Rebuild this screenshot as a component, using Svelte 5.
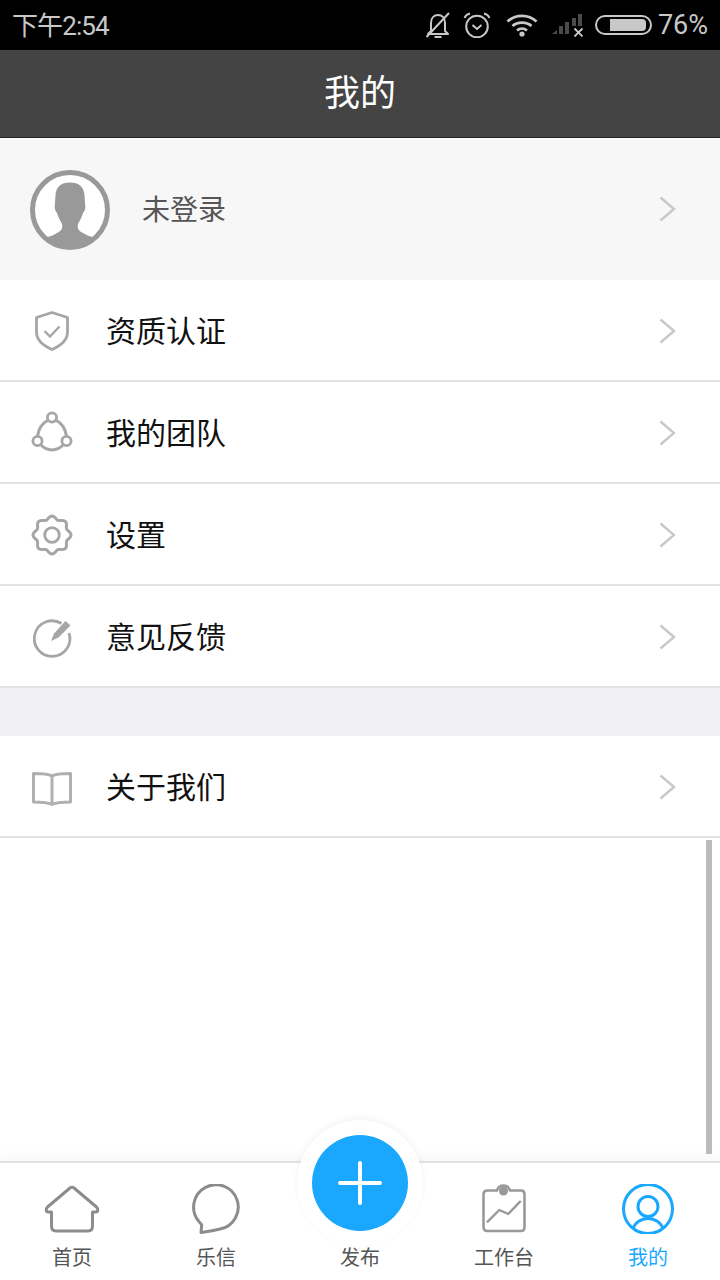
<script>
  const menuTop = [
    { label: '资质认证', icon: 'shield' },
    { label: '我的团队', icon: 'team' },
    { label: '设置', icon: 'gear' },
    { label: '意见反馈', icon: 'edit' }
  ];
  const gearPath = (() => {
    // wavy outline of the settings icon
    let d = '';
    for (let i = 0; i <= 360; i += 5) {
      const a = (i * Math.PI) / 180;
      const r = 17.4 + 1.6 * Math.cos(8 * a);
      d += `${i ? 'L' : 'M'}${(20 + r * Math.sin(a)).toFixed(2)} ${(20 - r * Math.cos(a)).toFixed(2)}`;
    }
    return d + 'Z';
  })();
</script>

{#snippet chevron()}
  <svg class="chevron" width="18" height="26" viewBox="0 0 18 26">
    <path d="M1.500 1.500 L15 13 L1.500 24.500" fill="none" stroke="#c8c8c8" stroke-width="2.400" />
  </svg>
{/snippet}

{#snippet menuIcon(name)}
  <svg class="icon" width="40" height="40" viewBox="0 0 40 40" fill="none" stroke="#a6a6a6" stroke-width="2.800">
    {#if name === 'shield'}
      <path d="M20 1.500 L35.500 6.500 V21 C35.500 30 28 35 20 38.500 C12 35 4.500 30 4.500 21 V6.500 Z" stroke-linejoin="round" />
      <path d="M12.500 20 L18 25.500 L27.500 15.500" stroke-width="2.400" />
    {:else if name === 'team'}
      <path d="M15.500 7.500 C10 10.500 6.500 16 5.500 23 M34.500 23 C33.500 16 30 10.500 24.500 7.500 M9 32 C15 38.500 25 38.500 31 32" stroke-width="3" />
      <circle cx="20" cy="4.500" r="4.600" />
      <circle cx="5.500" cy="28" r="4.600" />
      <circle cx="34.500" cy="28" r="4.600" />
    {:else if name === 'gear'}
      <path d={gearPath} stroke-linejoin="round" stroke-width="3" />
      <circle cx="20" cy="20" r="7.300" />
    {:else if name === 'edit'}
      <path d="M29.500 6.500 A17.800 17.800 0 1 0 37 16" />
      <path d="M19 24 L22 16.500 L33.500 4 L38.500 8.500 L26.500 20.500 Z" fill="#a6a6a6" stroke="none" />
    {:else}
      <path d="M20 9 C16 6.500 8 6.500 1.500 6.500 V35 C8 35 15 35 20 37.500 C25 35 32 35 38.500 35 V6.500 C32 6.500 24 6.500 20 9 V37" stroke-linejoin="round" stroke="#b0b0b0" stroke-width="3" />
    {/if}
  </svg>
{/snippet}

<div class="page">
  <header class="statusbar">
    <span class="time">下午2:54</span>
    <div class="status-icons">
      <svg width="26" height="26" viewBox="0 0 26 26" fill="none" stroke="#c8c8c8" stroke-width="2">
        <path d="M6 19 V11 C6 6 9 3 13 3 C17 3 20 6 20 11 V19 L23 22 H3 Z" stroke-linejoin="round" />
        <path d="M9.500 25 H16.500" />
        <path d="M1.500 25 L24 1" stroke-width="2" />
      </svg>
      <svg class="alarm" width="28" height="26" viewBox="0 0 28 26" fill="none" stroke="#c8c8c8" stroke-width="2">
        <circle cx="14" cy="14.500" r="10.800" />
        <path d="M9.500 13 L14 17 L18.500 13" />
        <path d="M1.500 6 C2.500 3.500 4.500 2 7 1.500 M21 1.500 C23.500 2 25.500 3.500 26.500 6" />
      </svg>
      <svg class="wifi" width="32" height="24" viewBox="0 0 32 24" fill="none" stroke="#c8c8c8" stroke-width="2.800">
        <path d="M1.500 8.500 C9.500 1 22.500 1 30.500 8.500" />
        <path d="M6.500 13 C11.500 8.500 20.500 8.500 25.500 13" />
        <path d="M11 17.500 C14 15 18 15 21 17.500" />
        <circle cx="16" cy="21" r="2.600" fill="#c8c8c8" stroke="none" />
      </svg>
      <svg class="signal" width="32" height="24" viewBox="0 0 32 24" fill="#4a4a4a">
        <path d="M0 21 L5 17 V21 Z" />
        <rect x="7" y="13" width="4" height="8" />
        <rect x="13" y="9" width="4" height="12" />
        <rect x="20" y="5" width="4" height="8" />
        <rect x="26" y="1" width="4" height="12" />
        <path d="M22.500 15.500 L30.500 23.500 M30.500 15.500 L22.500 23.500" fill="none" stroke="#c8c8c8" stroke-width="1.800" />
      </svg>
      <div class="battery"><div class="battery-level"></div></div>
      <span class="percent">76%</span>
    </div>
  </header>

  <div class="titlebar">我的</div>

  <section class="profile">
    <svg class="avatar" width="80" height="80" viewBox="0 0 80 80">
      <circle cx="40" cy="40" r="37.500" fill="#fff" stroke="#999" stroke-width="5" />
      <path d="M40 12.500 C31 12.500 26 17 25.500 25 L25 33 C24 37 25 41 27 43 C28 47 30 50 32 54 C33 59 31 61 27 63 C24 65 21 66 17.500 67 C24 74 32 77.500 40 77.500 C48 77.500 56 74 62.500 67 C59 66 56 65 53 63 C49 61 47 59 48 54 C50 50 52 47 53 43 C55 41 56 37 55 33 L54.500 25 C54 17 49 12.500 40 12.500 Z" fill="#999" />
    </svg>
    <span class="profile-name">未登录</span>
    {@render chevron()}
  </section>

  <ul class="menu">
    {#each menuTop as item}
      <li class="row">
        {@render menuIcon(item.icon)}
        <span class="label">{item.label}</span>
        {@render chevron()}
      </li>
    {/each}
  </ul>

  <div class="spacer"></div>

  <ul class="menu">
    <li class="row">
      {@render menuIcon('book')}
      <span class="label">关于我们</span>
      {@render chevron()}
    </li>
  </ul>

  <main class="content"></main>

  <nav class="tabbar">
    <div class="tab">
      <svg width="56" height="50" viewBox="0 0 56 50" fill="none" stroke="#8c8c8c" stroke-width="3" stroke-linejoin="round">
        <path d="M26 4 C27 3 29 3 30 4 L52.500 23 C54.500 25 54 28 52 28 H48.500 V42 C48.500 45.500 47 47 44 47 H12 C9 47 7.500 45.500 7.500 42 V28 H4 C2 28 1.500 25 3.500 23 Z" />
      </svg>
      <span>首页</span>
    </div>
    <div class="tab">
      <svg width="56" height="50" viewBox="0 0 56 50" fill="none" stroke="#8c8c8c" stroke-width="3" stroke-linejoin="round">
        <path d="M13 48.500 C19 47.500 27 46.500 32 45 A22.300 22.300 0 1 0 10.500 37 C11.500 38.500 13 39.500 13.700 41 Z" />
      </svg>
      <span>乐信</span>
    </div>
    <div class="tab tab-publish"><span>发布</span></div>
    <div class="tab">
      <svg width="56" height="50" viewBox="0 0 56 50" fill="none" stroke="#999" stroke-width="2.600" stroke-linejoin="round">
        <path d="M7.500 10.500 C7.500 8 9 6.500 11.500 6.500 H21 C23 0 32 0 34 6.500 H45 C47 6.500 48.500 8 48.500 10.500 V43 C48.500 45.500 47 47 45 47 H11.500 C9 47 7.500 45.500 7.500 43 Z" />
        <circle cx="27.500" cy="7" r="4.500" fill="#999" stroke="none" />
        <path d="M11.700 37.700 L23.300 26 L32.300 30 L44 17.700" stroke-width="2.400" stroke-linecap="round" />
      </svg>
      <span>工作台</span>
    </div>
    <div class="tab tab-active">
      <svg width="56" height="50" viewBox="0 0 56 50" fill="none" stroke="#1aa8ff" stroke-width="3">
        <circle cx="28" cy="25" r="24.500" />
        <circle cx="28" cy="22.500" r="10" />
        <path d="M13 45 C15 38.500 21 34.500 28 34.500 C35 34.500 41 38.500 43 45" />
      </svg>
      <span>我的</span>
    </div>
  </nav>

  <div class="scrollbar"></div>

  <button class="publish" aria-label="发布">
    <svg width="46" height="46" viewBox="0 0 46 46">
      <path d="M23 3 V43 M3 23 H43" stroke="#fff" stroke-width="4" stroke-linecap="round" />
    </svg>
  </button>
</div>

<style>
  :global(body) {
    margin: 0;
    background: #fff;
  }

  .page {
    position: relative;
    display: flex;
    flex-direction: column;
    width: 720px;
    height: 1280px;
    overflow: hidden;
    font-family: "Liberation Sans", "Noto Sans CJK SC", sans-serif;
  }

  ul {
    margin: 0;
    padding: 0;
    list-style: none;
  }

  .statusbar {
    display: flex;
    align-items: center;
    justify-content: space-between;
    height: 50px;
    padding: 0 12px;
    box-sizing: border-box;
    background: #000;
    color: #c8c8c8;
    font-family: Roboto, "Noto Sans CJK SC", sans-serif;
    flex-shrink: 0;
  }

  .time {
    margin-top: 2px;
    font-size: 26px;
    line-height: 50px;
    letter-spacing: -0.9px;
  }

  .status-icons {
    display: flex;
    align-items: center;
  }

  .alarm {
    margin-left: 12px;
  }

  .wifi {
    margin-left: 15px;
  }

  .signal {
    margin-left: 14px;
  }

  .battery {
    width: 57px;
    height: 20px;
    margin-left: 11px;
    padding: 2px 2px 2px 13px;
    box-sizing: border-box;
    border: 2px solid #c8c8c8;
    border-radius: 10px;
  }

  .battery-level {
    width: 36px;
    height: 12px;
    background: #c8c8c8;
    border-radius: 0 4px 4px 0;
  }

  .percent {
    margin-left: 6px;
    font-size: 27px;
    line-height: 50px;
  }

  .titlebar {
    height: 87px;
    line-height: 88px;
    flex-shrink: 0;
    text-align: center;
    color: #fff;
    font-size: 36px;
    background: #444;
    border-bottom: 1px solid #222;
  }

  .profile {
    display: flex;
    align-items: center;
    height: 142px;
    padding: 0 43px 0 30px;
    flex-shrink: 0;
    background: #f7f7f7;
  }

  .avatar {
    margin-top: 2px;
  }

  .profile-name {
    flex: 1;
    margin-left: 32px;
    padding-bottom: 2px;
    color: #555;
    font-size: 28px;
  }

  .row {
    display: flex;
    align-items: center;
    height: 102px;
    padding: 0 43px 0 32px;
    box-sizing: border-box;
    background: #fff;
    border-bottom: 2px solid #e2e2e2;
  }

  .row svg {
    margin-top: 2px;
  }

  .icon {
    overflow: visible;
  }

  .label {
    flex: 1;
    margin-left: 34px;
    padding-bottom: 2px;
    color: #111;
    font-size: 30px;
  }

  .spacer {
    height: 48px;
    flex-shrink: 0;
    background: #f0f0f5;
  }

  .content {
    flex: 1;
  }

  .tabbar {
    display: flex;
    height: 119px;
    flex-shrink: 0;
    box-sizing: border-box;
    background: #fff;
    border-top: 2px solid #e2e2e2;
    box-shadow: 0 -5px 10px rgba(0, 0, 0, 0.03);
  }

  .tab {
    display: flex;
    flex: 1;
    flex-direction: column;
    align-items: center;
    padding-top: 21px;
    box-sizing: border-box;
    color: #555;
    font-size: 20px;
    line-height: 28px;
  }

  .tab svg {
    display: block;
    margin-bottom: 10px;
  }

  .tab-publish {
    padding-top: 81px;
  }

  .tab-active {
    color: #1aa8ff;
  }

  .scrollbar {
    position: absolute;
    left: 706px;
    top: 840px;
    width: 6px;
    height: 314px;
    background: #bbb;
  }

  .publish {
    position: absolute;
    left: 312px;
    top: 1135px;
    display: flex;
    align-items: center;
    justify-content: center;
    width: 96px;
    height: 96px;
    padding: 0;
    border: none;
    border-radius: 50%;
    background: #1aa8ff;
    box-shadow: 0 0 0 15px #fff, 0 -2px 6px 15px rgba(0, 0, 0, 0.05);
  }
</style>
